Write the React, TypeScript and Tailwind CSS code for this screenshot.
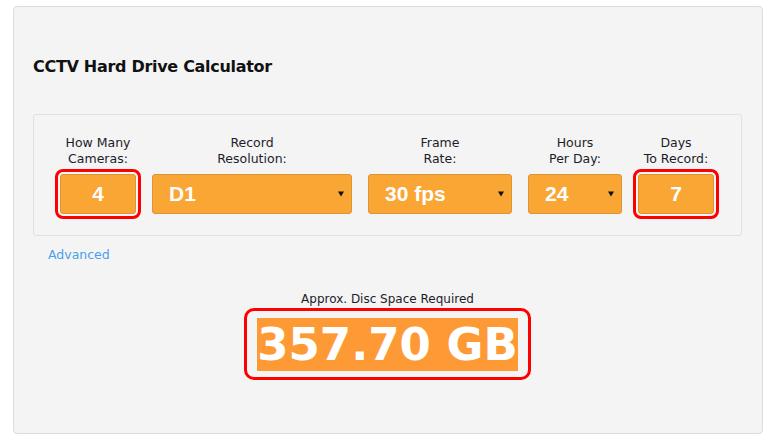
import React from "react";

const dv = { fontFamily: '"DejaVu Sans", Verdana, sans-serif' };
const ar = { fontFamily: '"Liberation Sans", Arial, sans-serif' };

function Arrow() {
  return (
    <svg width="6" height="6" viewBox="0 0 6 6" className="block">
      <polygon points="0,0.5 6,0.5 3,5.5" fill="#111" />
    </svg>
  );
}

function Field({
  l1,
  l2,
  width,
  value,
  select,
  ring,
}: {
  l1: string;
  l2: string;
  width: string;
  value: string;
  select?: boolean;
  ring?: boolean;
}) {
  return (
    <div className={`flex flex-col items-center ${width}`}>
      <div className="text-[12.5px] leading-[16px] text-[#1c1c2a] text-center whitespace-nowrap" style={dv}>
        <div>{l1}</div>
        <div>{l2}</div>
      </div>
      <div
        className={`mt-[7px] h-[40px] w-full rounded-[3px] border border-[#dc9533] bg-[#faa635] flex items-center text-white font-bold text-[21px] ${
          select ? "justify-between pl-[16px] pr-[7px]" : "justify-center"
        } ${ring ? "outline-[3px] outline-solid outline-[#ff0000] outline-offset-[2px]" : ""}`}
        style={ar}
      >
        <span>{value}</span>
        {select && <Arrow />}
      </div>
    </div>
  );
}

export default function App() {
  return (
    <div className="bg-white w-[780px] h-[444px] pt-[6px] pl-[13px]">
      <div className="w-[750px] h-[428px] rounded-[4px] border border-[#dddddd] bg-[#f4f4f4] pt-[50px] pl-[19px] pr-[20px]">
        <h1 className="text-[16px] leading-[20px] font-bold text-[#111] tracking-[-0.3px]" style={dv}>
          CCTV Hard Drive Calculator
        </h1>
        <div className="mt-[37px] h-[122px] rounded-[3px] border border-[#e0e0e0] pt-[20px] pl-[26px] flex gap-[16px]">
          <Field l1="How Many" l2="Cameras:" width="w-[76px]" value="4" ring />
          <Field l1="Record" l2="Resolution:" width="w-[200px]" value="D1" select />
          <Field l1="Frame" l2="Rate:" width="w-[144px]" value="30 fps" select />
          <Field l1="Hours" l2="Per Day:" width="w-[94px]" value="24" select />
          <Field l1="Days" l2="To Record:" width="w-[76px]" value="7" ring />
        </div>
        <div className="mt-[11px] pl-[15px] text-[12.5px] leading-[16px] text-[#4a9ef0]" style={dv}>
          Advanced
        </div>
        <div className="mt-[28px] flex flex-col items-center">
          <div className="text-[12px] leading-[16px] text-[#1c1c2a]" style={dv}>
            Approx. Disc Space Required
          </div>
          <div className="mt-[1px] rounded-[10px] border-[3px] border-[#ff0000] pt-[7px] pb-[6px] px-[10px]">
            <div className="bg-[#fe9a35] text-white font-bold text-[45px] leading-[53px] whitespace-nowrap" style={dv}>
              357.70 GB
            </div>
          </div>
        </div>
      </div>
    </div>
  );
}
